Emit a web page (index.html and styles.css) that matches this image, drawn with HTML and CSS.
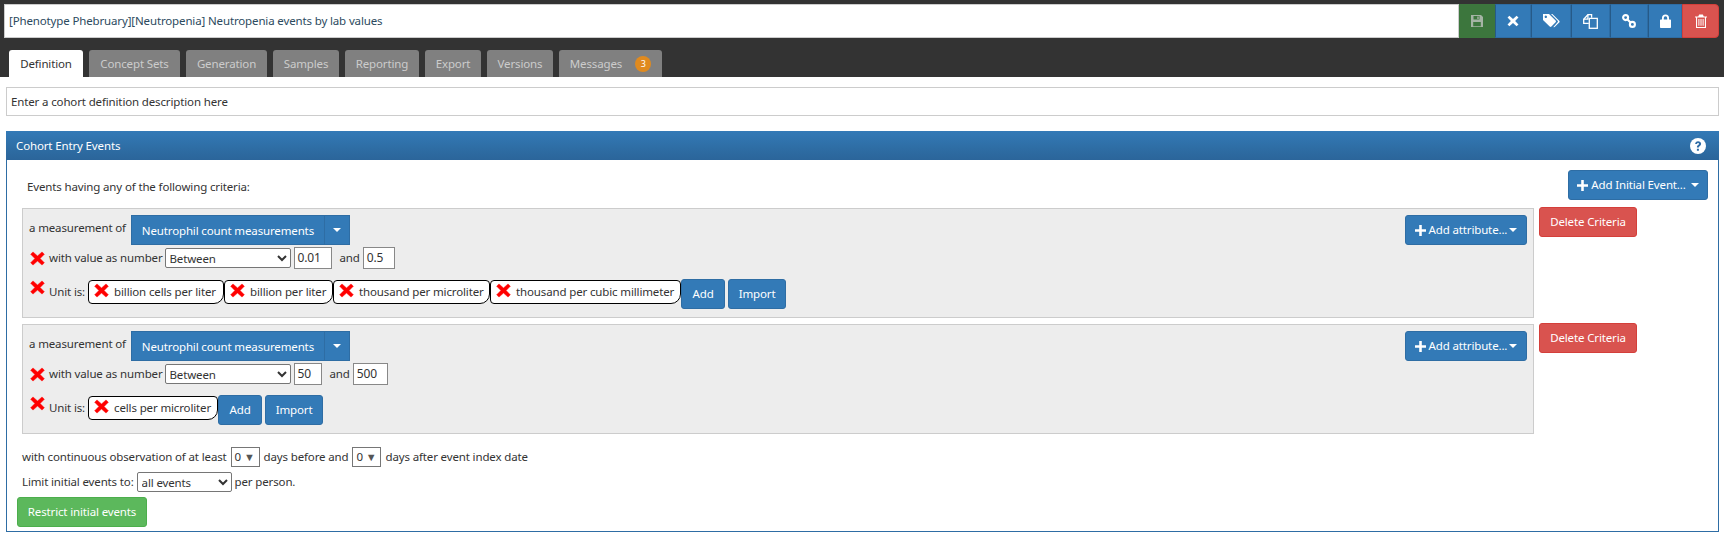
FILE: index.html
```html
<!DOCTYPE html>
<html lang="en">
<head>
<meta charset="utf-8">
<title>Neutropenia events by lab values</title>
<link rel="stylesheet" href="styles.css">
</head>
<body>
<svg class="defs" width="0" height="0" aria-hidden="true">
  <symbol id="i-x" viewBox="0 0 16 16"><path d="M3.2 1 8 5.3 12.8 1 15.3 3.4 10.8 8 15.3 12.6 12.8 15 8 10.7 3.2 15 .7 12.6 5.2 8 .7 3.4Z" stroke-width=".5" stroke-linejoin="round"/></symbol>
  <symbol id="i-plus" viewBox="0 0 12 12"><path d="M4.6 0h2.8v4.6H12v2.8H7.4V12H4.6V7.4H0V4.6h4.6Z"/></symbol>
</svg>

<header class="top">
  <div class="titlebar">
    <div class="title">[Phenotype Phebruary][Neutropenia] Neutropenia events by lab values</div>
    <div class="actions">
      <span class="act act-save"><svg width="14" height="14" viewBox="0 0 14 14"><path fill-rule="evenodd" d="M1 1h10l2 2v10H1ZM3.5 2v3.6h6V2ZM7.3 2.5h1.4v2.5H7.3ZM3.2 8v4.2h7.6V8Z"/></svg></span>
      <span class="act act-blue w36"><svg width="12" height="12" viewBox="0 0 16 16"><use href="#i-x"/></svg></span>
      <span class="act act-blue w40"><svg width="17" height="14" viewBox="0 0 17 14"><path fill-rule="evenodd" d="M0 0h6l6.6 6.6a1.2 1.2 0 0 1 0 1.7L8.4 12.6a1.2 1.2 0 0 1-1.7 0L0 6ZM2.8 1.6a1.2 1.2 0 1 0 .01 0Z"/><path d="M8 0h1.4l6.8 6.8a1.2 1.2 0 0 1 0 1.7l-4.3 4.3a1.2 1.2 0 0 1-1.5.1L14.6 8.2a1 1 0 0 0 0-1.4Z"/></svg></span>
      <span class="act act-blue w39"><svg class="line-icon" width="15" height="15" viewBox="0 0 15 15"><path d="M5.8 9.4H.7V5.2L4.9.7H8.6V3.8"/><path d="M4.9.7V5.2H.7"/><rect x="6.3" y="4.4" width="8" height="9.9"/></svg></span>
      <span class="act act-blue w38"><svg class="line-icon link-icon" width="14" height="14" viewBox="0 0 14 14"><ellipse cx="3.6" cy="3.6" rx="2.5" ry="2.5"/><ellipse cx="10.4" cy="10.4" rx="2.5" ry="2.5"/><path d="M5.5 5.5l3 3"/></svg></span>
      <span class="act act-blue w34"><svg width="11" height="14" viewBox="0 0 11 14"><path fill-rule="evenodd" d="M2 5.5V4a3.5 3.5 0 0 1 7 0v1.5h1.2a.8.8 0 0 1 .8.8v6.9a.8.8 0 0 1-.8.8H.8a.8.8 0 0 1-.8-.8V6.3a.8.8 0 0 1 .8-.8ZM3.8 5.5h3.4V4a1.7 1.7 0 0 0-3.4 0Z"/></svg></span>
      <span class="act act-del"><svg width="12" height="14" viewBox="0 0 12 14"><path fill-rule="evenodd" d="M0 2.4h3.2L4.2.6h3.6l1 1.8H12v1.1h-1V14H1V3.5H0ZM2.1 3.5v9.4h7.8V3.5ZM3.4 5h1v6.8h-1ZM5.5 5h1v6.8h-1ZM7.6 5h1v6.8h-1Z"/></svg></span>
    </div>
  </div>
  <nav class="tabs">
    <span class="tab tab-on t74">Definition</span>
    <span class="tab t91">Concept Sets</span>
    <span class="tab t81">Generation</span>
    <span class="tab t66">Samples</span>
    <span class="tab t74">Reporting</span>
    <span class="tab t56">Export</span>
    <span class="tab t66">Versions</span>
    <span class="tab tab-msg">Messages <span class="badge">3</span></span>
  </nav>
</header>

<main class="content">
  <div class="desc">Enter a cohort definition description here</div>

  <section class="panel">
    <div class="panel-head">
      <span>Cohort Entry Events</span>
      <svg class="help" width="16" height="16" viewBox="0 0 16 16"><circle cx="8" cy="8" r="8" fill="#fff"/><path d="M5.1 6.1C5.2 4.4 6.4 3.2 8.1 3.2c1.7 0 3 1.1 3 2.6 0 1.3-.8 1.9-1.5 2.4-.5.4-.7.6-.7 1.1v.3H6.9v-.5c0-1 .5-1.6 1.2-2.1.6-.4.9-.7.9-1.2 0-.5-.4-.8-.9-.8-.6 0-1 .4-1 1Z M6.9 10.7h2V12.8h-2Z" fill="#2f6ca6"/></svg>
    </div>
    <div class="panel-body">
      <div class="intro">
        <span class="intro-text">Events having any of the following criteria:</span>
        <span class="btn btn-blue btn-initial"><svg class="plus" width="11" height="11"><use href="#i-plus"/></svg> Add Initial Event... <i class="caret"></i></span>
      </div>

      <div class="criterion">
        <div class="cbox">
          <div class="row-one">
            <span class="lbl">a measurement of</span>
            <span class="concept"><span class="concept-name">Neutrophil count measurements</span><span class="concept-caret"><i class="caret"></i></span></span>
            <span class="btn btn-blue btn-attr"><svg class="plus" width="11" height="11"><use href="#i-plus"/></svg> Add attribute...<i class="caret"></i></span>
          </div>
          <div class="row-two">
            <svg class="rx" width="15" height="15"><use href="#i-x"/></svg>
            <span class="lbl">with value as number</span>
            <select class="sel sel-op"><option>Between</option></select>
            <span class="num n38">0.01</span>
            <span class="lbl lbl-and">and</span>
            <span class="num n32">0.5</span>
          </div>
          <div class="row-three">
            <svg class="rx" width="15" height="15"><use href="#i-x"/></svg>
            <span class="lbl lbl-unit">Unit is:</span>
            <span class="chip w136"><svg class="rx" width="15" height="15"><use href="#i-x"/></svg>billion cells per liter</span>
            <span class="chip w109"><svg class="rx" width="15" height="15"><use href="#i-x"/></svg>billion per liter</span>
            <span class="chip w157"><svg class="rx" width="15" height="15"><use href="#i-x"/></svg>thousand per microliter</span>
            <span class="chip w191"><svg class="rx" width="15" height="15"><use href="#i-x"/></svg>thousand per cubic millimeter</span>
            <span class="btn btn-blue btn-add">Add</span>
            <span class="btn btn-blue btn-import">Import</span>
          </div>
        </div>
        <span class="btn btn-red btn-delete">Delete Criteria</span>
      </div>

      <div class="criterion">
        <div class="cbox">
          <div class="row-one">
            <span class="lbl">a measurement of</span>
            <span class="concept"><span class="concept-name">Neutrophil count measurements</span><span class="concept-caret"><i class="caret"></i></span></span>
            <span class="btn btn-blue btn-attr"><svg class="plus" width="11" height="11"><use href="#i-plus"/></svg> Add attribute...<i class="caret"></i></span>
          </div>
          <div class="row-two">
            <svg class="rx" width="15" height="15"><use href="#i-x"/></svg>
            <span class="lbl">with value as number</span>
            <select class="sel sel-op"><option>Between</option></select>
            <span class="num n29">50</span>
            <span class="lbl lbl-and">and</span>
            <span class="num n35">500</span>
          </div>
          <div class="row-three">
            <svg class="rx" width="15" height="15"><use href="#i-x"/></svg>
            <span class="lbl lbl-unit">Unit is:</span>
            <span class="chip w130"><svg class="rx" width="15" height="15"><use href="#i-x"/></svg>cells per microliter</span>
            <span class="btn btn-blue btn-add">Add</span>
            <span class="btn btn-blue btn-import">Import</span>
          </div>
        </div>
        <span class="btn btn-red btn-delete">Delete Criteria</span>
      </div>

      <div class="line-obs">
        <span class="lbl">with continuous observation of at least</span>
        <span class="drop">0 <b class="tri">▼</b></span>
        <span class="lbl">days before and</span>
        <span class="drop">0 <b class="tri">▼</b></span>
        <span class="lbl">days after event index date</span>
      </div>
      <div class="line-limit">
        <span class="lbl">Limit initial events to:</span>
        <select class="sel sel-limit"><option>all events</option></select>
        <span class="lbl">per person.</span>
      </div>
      <span class="btn btn-green btn-restrict">Restrict initial events</span>
    </div>
  </section>
</main>
</body>
</html>
```

FILE: styles.css
```css
* { box-sizing: border-box; }
html, body { margin: 0; padding: 0; }
body {
  width: 1724px;
  height: 540px;
  overflow: hidden;
  background: #fff;
  color: #333;
  font-family: "Noto Sans", "Open Sans", sans-serif;
  font-size: 11.5px;
  letter-spacing: -0.14px;
  line-height: 16px;
}
.defs { position: absolute; }

/* top bar */
.top { background: #333; height: 77px; padding: 4px 5px 0 4px; }
.titlebar { display: flex; height: 34px; }
.title {
  flex: 1;
  background: #fff;
  border: 1px solid #ccc;
  padding: 0 4px;
  line-height: 32px;
  color: #2c4a5e;
}
.actions { display: flex; }
.act {
  display: flex;
  align-items: center;
  justify-content: center;
  border: 1px solid #2e6da4;
  border-left-color: #285f90;
}
.act svg { fill: #fff; }
.act .line-icon { fill: none; stroke: #fff; stroke-width: 1.3; }
.act .link-icon { stroke-width: 2.1; }
.act-save { width: 36px; background: #3c763d; border-color: #3c763d; }
.act-save svg { fill: #a5b4a5; }
.act-blue { background: #337ab7; border-color: #2e6da4 #2e6da4 #2e6da4 #265a88; }
.w36 { width: 36px; }
.w40 { width: 40px; }
.w39 { width: 39px; }
.w38 { width: 38px; }
.w34 { width: 34px; }
.act-del { width: 37px; background: #d9534f; border-color: #d43f3a; border-radius: 0 4px 4px 0; }

.tabs { display: flex; gap: 6px; padding: 12px 0 0 5px; }
.tab {
  height: 27px;
  line-height: 27px;
  background: #808080;
  color: #ccc;
  border-radius: 3px 3px 0 0;
  text-align: center;
}
.t74 { width: 74px; }
.t91 { width: 91px; }
.t81 { width: 81px; }
.t66 { width: 66px; }
.t56 { width: 56px; }
.tab-on { background: #fff; color: #333; }
.tab-msg { display: flex; align-items: center; justify-content: center; width: 103px; }
.badge {
  width: 16px;
  height: 16px;
  margin-left: 13px;
  border-radius: 50%;
  background: #e08a1e;
  color: #fff;
  font-size: 9px;
  line-height: 16px;
  text-align: center;
}

/* content */
.content { padding: 10px 5px 0 6px; }
.desc {
  height: 29px;
  border: 1px solid #ccc;
  padding: 0 4px;
  line-height: 27px;
}
.panel { margin-top: 15px; border: 1px solid #2e6da4; border-top: 0; height: 401px; }
.panel-head {
  display: flex;
  justify-content: space-between;
  align-items: center;
  height: 29px;
  padding: 0 13px 0 10px;
  margin: 0 -1px;
  background: linear-gradient(#337ab7, #2e6da4 60%, #2b659a);
  color: #fff;
}
.panel-body { padding: 10px 5px 0 10px; }
.intro { display: flex; justify-content: space-between; height: 38px; padding: 0 5px 0 10px; }
.intro-text { margin-top: 9px; }

/* buttons */
.btn {
  display: inline-flex;
  align-items: center;
  justify-content: center;
  height: 30px;
  border: 1px solid;
  border-radius: 3px;
  color: #fff;
  white-space: pre;
}
.btn-blue { background: #337ab7; border-color: #2e6da4; }
.btn-red { background: #d9534f; border-color: #d43f3a; }
.btn-green { background: #5cb85c; border-color: #4cae4c; }
.plus { fill: #fff; }
.caret {
  display: inline-block;
  width: 0;
  height: 0;
  margin-left: 2px;
  border-top: 4px solid #fff;
  border-left: 4px solid transparent;
  border-right: 4px solid transparent;
}
.btn-initial { width: 140px; }
.btn-attr { width: 122px; margin-left: auto; margin-right: 6px; }
.btn-delete { width: 98px; margin: -1px 0 0 5px; }
.btn-add { width: 44px; }
.btn-import { width: 58px; margin-left: 3px; }
.btn-restrict { width: 130px; margin-top: 4px; }

/* criteria */
.criterion { display: flex; align-items: flex-start; margin-bottom: 6px; height: 110px; }
.cbox {
  width: 1512px;
  height: 110px;
  margin-left: 5px;
  background: #ededed;
  border: 1px solid #ccc;
  padding: 6px 0 0 6px;
}
.lbl { white-space: pre; }
.row-one { display: flex; align-items: center; height: 30px; }
.row-one .lbl { margin-right: 5px; margin-top: -4px; }
.concept { display: flex; height: 30px; border: 1px solid #2e6da4; background: #337ab7; color: #fff; }
.concept-name { width: 192px; line-height: 30px; text-align: center; }
.concept-caret { width: 25px; border-left: 1px solid #2e6da4; display: flex; align-items: center; justify-content: center; }
.concept-caret .caret { margin: 0; }
.row-two { display: flex; align-items: center; height: 22px; margin-top: 2px; }
.rx { fill: #f00; stroke: #f00; flex: none; margin-left: 1px; margin-right: 4px; }
.sel {
  height: 20px;
  margin: 0 3px 0 2px;
  padding: 0;
  border: 1px solid #767676;
  border-radius: 2px;
  background-color: #fff;
  color: #333;
  font: inherit;
  letter-spacing: inherit;
}
.sel-op { width: 126px; }
.sel-limit { width: 95px; margin-left: 3px; }
.num {
  height: 22px;
  border: 1px solid #888;
  background: #fff;
  padding: 0 3px;
  line-height: 20px;
  font-size: 12px;
}
.n38 { width: 38px; }
.n32 { width: 32px; }
.n29 { width: 28px; }
.n35 { width: 35px; }
.lbl-and { margin: 0 3px 0 8px; }
.row-three { display: flex; align-items: flex-start; height: 30px; margin-top: 10px; }
.row-three > .rx { margin-top: 1px; }
.lbl-unit { margin-top: 5px; margin-right: 3px; }
.chip {
  display: flex;
  align-items: center;
  height: 24px;
  margin-top: 1px;
  padding-left: 5px;
  background: #fff;
  border: 1px solid #000;
  border-radius: 4px 4px 10px 4px;
  white-space: pre;
}
.chip .rx { margin: -3px 5px 0 0; }
.w136 { width: 136px; }
.w109 { width: 109px; }
.w157 { width: 157px; }
.w191 { width: 191px; }
.w130 { width: 130px; }

/* bottom */
.line-obs, .line-limit { display: flex; align-items: center; height: 22px; margin-left: 5px; }
.line-obs { margin-top: 12px; }
.line-limit { margin-top: 3px; }
.line-obs .lbl + .drop { margin-left: 4px; }
.drop {
  width: 29px;
  height: 20px;
  margin-right: 4px;
  border: 1px solid #767676;
  padding-left: 3px;
  line-height: 18px;
  background: #fff;
  white-space: pre;
}
.tri { font-weight: normal; font-size: 11px; color: #555; }
```
